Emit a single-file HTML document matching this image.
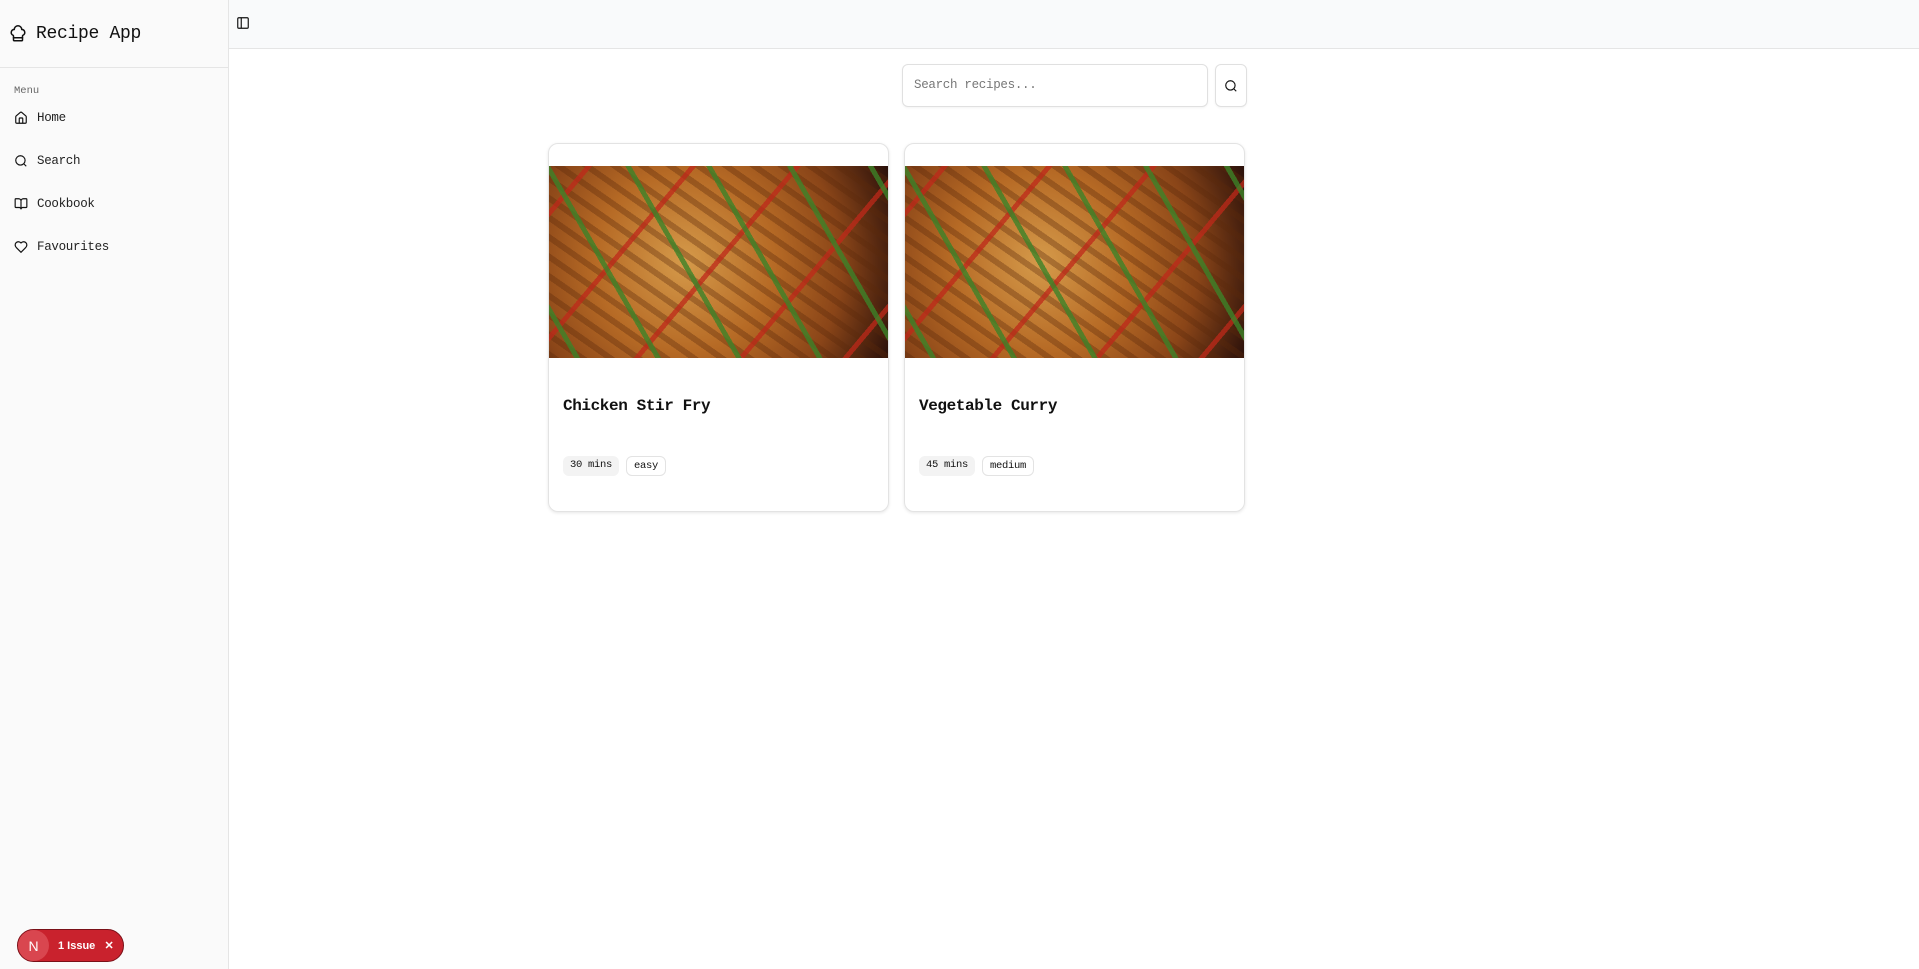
<!DOCTYPE html>
<html><head><meta charset="utf-8"><style>
*{box-sizing:border-box;margin:0;padding:0}
body{width:1919px;height:969px;overflow:hidden;font-family:"Liberation Mono",monospace;background:#fff;color:#111;position:relative}
.side{position:absolute;left:0;top:0;width:229px;height:969px;background:#fafafa;border-right:1px solid #e5e5e5}
.logo{height:68px;border-bottom:1px solid #e5e5e5;display:flex;align-items:center;padding-left:9px;font-size:18px;gap:9px;letter-spacing:-0.3px}
.menu{font-size:10.5px;color:#666;position:absolute;left:14px;top:85px}
.item{position:absolute;left:14px;display:flex;align-items:center;gap:9px;font-size:12.5px;color:#222;letter-spacing:-0.3px}
.top{position:absolute;left:229px;top:0;right:0;height:49px;background:#f9fafb;border-bottom:1px solid #e5e5e5}
.search{position:absolute;left:902px;top:64px;width:306px;height:43px;border:1px solid #e0e0e0;border-radius:6px;font-size:12.5px;color:#777;padding:13px 11px;box-shadow:0 1px 2px rgba(0,0,0,.05);letter-spacing:-0.3px}
.btn{position:absolute;left:1215px;top:64px;width:32px;height:43px;border:1px solid #e0e0e0;border-radius:6px;display:flex;align-items:center;justify-content:center;box-shadow:0 1px 2px rgba(0,0,0,.05)}
.card{position:absolute;top:143px;width:341px;height:369px;border:1px solid #e3e3e3;border-radius:10px;box-shadow:0 1px 3px rgba(0,0,0,.1);overflow:hidden}
.img{position:absolute;left:0;top:22px;width:100%;height:192px;background:
repeating-linear-gradient(60deg,transparent 0 22px,rgba(60,130,40,.8) 22px 27px,transparent 27px 70px),
repeating-linear-gradient(-50deg,transparent 0 30px,rgba(190,40,25,.75) 30px 35px,transparent 35px 80px),
repeating-linear-gradient(35deg,rgba(90,40,10,.35) 0 6px,transparent 6px 16px),
radial-gradient(circle at 40% 50%,#d59a4a,#b66a25 40%,#8a4518 70%,#2a100a 100%);}
.title{position:absolute;left:14px;top:253px;font-size:16px;font-weight:bold;letter-spacing:-0.4px}
.badges{position:absolute;left:14px;top:312px;display:flex;gap:7px}
.b{font-size:10.5px;padding:3px 7px;border-radius:6px;background:#f3f3f3;letter-spacing:-0.3px}
.b2{background:#fff;border:1px solid #e3e3e3}
.issue{position:absolute;left:17px;top:929px;width:107px;height:33px;border-radius:17px;background:#c9222d;border:1px solid #7a1018;color:#fff;font-family:"Liberation Sans",sans-serif;font-size:11px;font-weight:bold;display:flex;align-items:center}
.n{width:31px;height:31px;border-radius:50%;background:#d9464f;display:flex;align-items:center;justify-content:center;font-size:14px;font-weight:normal;margin-right:9px}
</style></head><body>
<div class="side">
<div class="logo"><svg width="18" height="18" viewBox="0 0 24 24" fill="none" stroke="#111" stroke-width="2" stroke-linecap="round" stroke-linejoin="round"><path d="M17 21a1 1 0 0 0 1-1v-5.35c0-.46.31-.85.73-1.04A4 4 0 0 0 17 6a5 5 0 0 0-10 0 4 4 0 0 0-1.73 7.61c.42.19.73.58.73 1.04V20a1 1 0 0 0 1 1Z"/><path d="M6 17h12"/></svg>Recipe App</div>
<div class="menu">Menu</div>
<div class="item" style="top:111px"><svg width="14" height="14" viewBox="0 0 24 24" fill="none" stroke="#111" stroke-width="2"><path d="M15 21v-8a1 1 0 0 0-1-1h-4a1 1 0 0 0-1 1v8"/><path d="M3 10a2 2 0 0 1 .7-1.5l7-6a2 2 0 0 1 2.6 0l7 6A2 2 0 0 1 21 10v9a2 2 0 0 1-2 2H5a2 2 0 0 1-2-2z"/></svg>Home</div>
<div class="item" style="top:154px"><svg width="14" height="14" viewBox="0 0 24 24" fill="none" stroke="#111" stroke-width="2"><circle cx="11" cy="11" r="8"/><path d="m21 21-4.3-4.3"/></svg>Search</div>
<div class="item" style="top:197px"><svg width="14" height="14" viewBox="0 0 24 24" fill="none" stroke="#111" stroke-width="2"><path d="M12 7v14"/><path d="M3 18a1 1 0 0 1-1-1V4a1 1 0 0 1 1-1h5a4 4 0 0 1 4 4 4 4 0 0 1 4-4h5a1 1 0 0 1 1 1v13a1 1 0 0 1-1 1h-6a3 3 0 0 0-3 3 3 3 0 0 0-3-3z"/></svg>Cookbook</div>
<div class="item" style="top:240px"><svg width="14" height="14" viewBox="0 0 24 24" fill="none" stroke="#111" stroke-width="2"><path d="M19 14c1.5-1.5 3-3.2 3-5.5A5.5 5.5 0 0 0 16.5 3c-1.8 0-3 .5-4.5 2-1.5-1.5-2.7-2-4.5-2A5.5 5.5 0 0 0 2 8.5c0 2.3 1.5 4 3 5.5l7 7Z"/></svg>Favourites</div>
<div class="issue"><div class="n">N</div>1 Issue&nbsp;&nbsp;&nbsp;✕</div>
</div>
<div class="top"><svg style="position:absolute;left:7px;top:16px" width="14" height="14" viewBox="0 0 24 24" fill="none" stroke="#111" stroke-width="2"><rect x="3" y="3" width="18" height="18" rx="2"/><path d="M9 3v18"/></svg></div>
<div class="search">Search recipes...</div>
<div class="btn"><svg width="14" height="14" viewBox="0 0 24 24" fill="none" stroke="#111" stroke-width="2"><circle cx="11" cy="11" r="8"/><path d="m21 21-4.3-4.3"/></svg></div>
<div class="card" style="left:548px"><div class="img"></div><div class="title">Chicken Stir Fry</div><div class="badges"><span class="b">30 mins</span><span class="b b2">easy</span></div></div>
<div class="card" style="left:904px"><div class="img"></div><div class="title">Vegetable Curry</div><div class="badges"><span class="b">45 mins</span><span class="b b2">medium</span></div></div>
</body></html>
